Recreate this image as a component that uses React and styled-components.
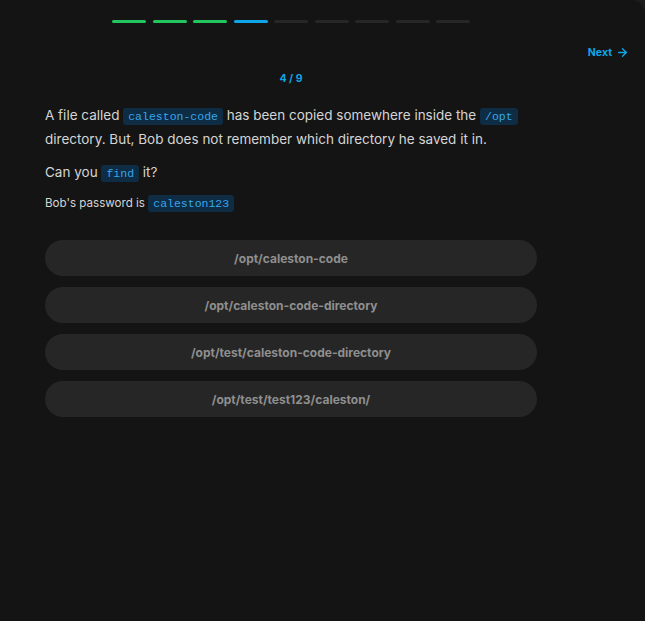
import React from "react";
import styled, { createGlobalStyle } from "styled-components";
import { FiArrowRight } from "react-icons/fi";

const GlobalStyle = createGlobalStyle`
  html, body {
    margin: 0;
    padding: 0;
    background: #1c1c1c;
  }
  body {
    font-family: Inter, "Noto Sans", sans-serif;
  }
`;

const Panel = styled.div`
  width: 645px;
  height: 621px;
  background: #141414;
  border-top-right-radius: 14px;
  overflow: hidden;
  display: flex;
  flex-direction: column;
`;

const ProgressRow = styled.div`
  width: 582px;
  display: flex;
  justify-content: center;
  gap: 6.5px;
  padding-top: 20px;
`;

const Segment = styled.div`
  width: 34px;
  height: 3px;
  border-radius: 2px;
  background: ${(p) =>
    p.state === "done" ? "#22c55e" : p.state === "current" ? "#0ea5e9" : "#262626"};
`;

const TopBar = styled.div`
  display: flex;
  justify-content: flex-end;
  padding: 23px 16px 0 0;
`;

const NextButton = styled.button`
  display: flex;
  align-items: center;
  gap: 4px;
  background: none;
  border: none;
  padding: 0;
  color: #0ea5e9;
  font-family: inherit;
  font-size: 10.5px;
  font-weight: 700;
  cursor: pointer;
`;

const Main = styled.div`
  width: 582px;
  box-sizing: border-box;
  padding: 0 45px;
  display: flex;
  flex-direction: column;
`;

const Counter = styled.div`
  text-align: center;
  color: #0ea5e9;
  font-size: 10.5px;
  font-weight: 700;
  margin-top: 13px;
`;

const Paragraph = styled.p`
  margin: ${(p) => p.$mt || 0}px 0 0;
  color: #d4d4d4;
  font-size: ${(p) => p.$size || 13.5}px;
  line-height: 22px;
`;

const Code = styled.code`
  font-family: "Liberation Mono", "DejaVu Sans Mono", monospace;
  font-size: 11.5px;
  color: #38a6ea;
  background: #0e2c44;
  padding: 2px 5px;
  border-radius: 3px;
`;

const Options = styled.div`
  display: flex;
  flex-direction: column;
  gap: 11px;
  margin-top: 25px;
`;

const Option = styled.button`
  height: 36px;
  border: none;
  border-radius: 18px;
  background: #262626;
  color: #8f8f8f;
  font-family: inherit;
  font-size: 12px;
  font-weight: 700;
  cursor: pointer;
`;

const answers = [
  "/opt/caleston-code",
  "/opt/caleston-code-directory",
  "/opt/test/caleston-code-directory",
  "/opt/test/test123/caleston/",
];

const steps = ["done", "done", "done", "current", "todo", "todo", "todo", "todo", "todo"];

export default function App() {
  return (
    <>
      <GlobalStyle />
      <Panel>
        <ProgressRow>
          {steps.map((s, i) => (
            <Segment key={i} state={s} />
          ))}
        </ProgressRow>
        <TopBar>
          <NextButton>
            Next <FiArrowRight size={13} strokeWidth={2.5} />
          </NextButton>
        </TopBar>
        <Main>
          <Counter>4 / 9</Counter>
          <Paragraph $mt={19}>
            A file called <Code>caleston-code</Code> has been copied somewhere inside the{" "}
            <Code>/opt</Code> directory. But, Bob does not remember which directory he saved it in.
          </Paragraph>
          <Paragraph $mt={11}>
            Can you <Code>find</Code> it?
          </Paragraph>
          <Paragraph $mt={7} $size={11.6}>
            Bob's password is <Code>caleston123</Code>
          </Paragraph>
          <Options>
            {answers.map((a) => (
              <Option key={a}>{a}</Option>
            ))}
          </Options>
        </Main>
      </Panel>
    </>
  );
}
